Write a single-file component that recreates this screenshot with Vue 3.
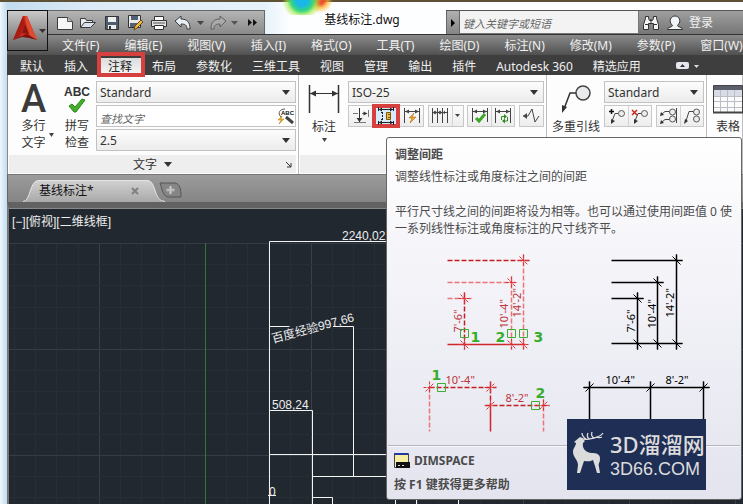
<script setup>
import { ref } from 'vue'

const menus = ['文件(F)', '编辑(E)', '视图(V)', '插入(I)', '格式(O)', '工具(T)', '绘图(D)', '标注(N)', '修改(M)', '参数(P)', '窗口(W)']
const tabs = ['默认', '插入', '注释', '布局', '参数化', '三维工具', '视图', '管理', '输出', '插件', 'Autodesk 360', '精选应用']
const activeTab = ref('注释')
const textStyle = ref('Standard')
const textHeight = ref('2.5')
const dimStyle = ref('ISO-25')
const leaderStyle = ref('Standard')
const search = ref('')
const findText = ref('')

// Drawing grid: one major line for every five minor ones, 106 px apart.
const gridX = Array.from({ length: 36 }, (_, i) => ({ at: Math.round(14 + i * 21.2), major: i % 5 === 4 }))
const gridY = Array.from({ length: 14 }, (_, i) => ({ at: Math.round(243 + i * 21.2), major: i % 5 === 0 }))

const down = (x, y) => `M${x - 6} ${y}h12M${x} ${y - 6}v12M${x - 4} ${y - 4}l8 8`
const up = (x, y) => `M${x - 6} ${y}h12M${x} ${y - 6}v12M${x - 4} ${y + 4}l8 -8`
const redTicks = [down(464, 298), down(511, 282), down(523, 260), down(464, 344), down(511, 344), down(523, 344), up(429, 387), up(490, 387), up(490, 405), up(543, 405)].join('')
const blackTicks = [down(637, 298), down(657, 282), down(676, 260), down(637, 343), down(657, 343), down(676, 343), up(589, 387), up(650, 387), up(703, 387)].join('')
const picks = [[464, 333], [511, 333], [523, 333], [441, 387], [535, 405]]
</script>

<template>
  <div class="window">
    <div class="orb" aria-hidden="true"></div>
    <header class="header">
      <button class="app" aria-label="应用程序菜单">
        <svg width="38" height="38" viewBox="0 0 38 38">
          <path d="M4 28L14 4l4 0 10 24-7-4-6-1-5 2z" fill="#c9291c" />
          <path d="M14 4L4 28l6-3 6-13z" fill="#a81c14" />
          <path d="M16 4l2 0 10 24-7-4-4-12z" fill="#e2492f" />
          <path d="M4 28l6-3 8-3 10 6-8-2-7-1z" fill="#7e100d" />
          <path d="M13 21l3-9 4 10z" fill="#8b1711" />
          <path d="M30 17h7l-3.500 4z" fill="#333" />
        </svg>
      </button>
      <div class="toprow">
        <div class="quick">
          <button class="q" aria-label="新建"><svg width="18" height="16" viewBox="0 0 18 16"><path d="M1.500 2.500h10l5 4v8h-15z" fill="#f6f6f6" stroke="#3b3b3b" /><path d="M11.500 2.500v4h5" fill="#bbb" stroke="#555" /></svg></button>
          <button class="q" aria-label="打开"><svg width="18" height="16" viewBox="0 0 18 16"><path d="M1.500 12.500v-9h5l1 2h6v2" fill="#e8ecf0" stroke="#3b3b3b" /><path d="M1.500 12.500l4-5h11l-5 5z" fill="#dbe3ec" stroke="#3b3b3b" /></svg></button>
          <button class="q" aria-label="保存"><svg width="16" height="16" viewBox="0 0 16 16"><path d="M1.500 1.500h13v13h-13z" fill="#4d5c70" stroke="#333" /><path d="M4 2h8v5H4zM4 10h8v4H4z" fill="#eee" /><path d="M5 11h2v3H5z" fill="#333" /></svg></button>
          <button class="q" aria-label="另存为"><svg width="17" height="17" viewBox="0 0 17 17"><path d="M1.500 1.500h12v12h-12z" fill="#e9e9e9" stroke="#333" /><path d="M4 2h7v4H4zM3 9h7v4H3z" fill="#536176" /><path d="M7 16l1-4 6-6 2 2-6 6z" fill="#f1b640" stroke="#6b4a12" /></svg></button>
          <button class="q" aria-label="打印"><svg width="18" height="16" viewBox="0 0 18 16"><path d="M4.500 6V1.500h9V6" fill="#fff" stroke="#333" /><path d="M1.500 5.500h15v6h-15z" fill="#e2e2e2" stroke="#333" /><path d="M3 8h12" stroke="#555" /><path d="M4.500 10.500h9v4h-9z" fill="#fff" stroke="#333" /></svg></button>
          <button class="q" aria-label="放弃"><svg width="18" height="16" viewBox="0 0 18 16"><path d="M1 6l6-5v3c6 0 9 3 9 10h-3c0-4-2-5-6-5v3z" fill="#e6edf3" stroke="#3a3a3a" /></svg></button>
          <button class="q small" aria-label="放弃列表"><svg width="7" height="4"><path d="M0 0h7l-3.500 4z" fill="#444" /></svg></button>
          <button class="q" aria-label="重做"><svg width="18" height="16" viewBox="0 0 18 16"><path d="M17 6l-6-5v3c-6 0-9 3-9 10h3c0-4 2-5 6-5v3z" fill="#a9a9a9" stroke="#616161" /></svg></button>
          <button class="q small" aria-label="重做列表"><svg width="7" height="4"><path d="M0 0h7l-3.500 4z" fill="#555" /></svg></button>
          <button class="q" aria-label="更多"><svg width="9" height="7"><path d="M0 0l4 3.500-4 3.500zM5 0l4 3.500-4 3.500z" fill="#111" /></svg></button>
        </div>
        <h1 class="title">基线标注.dwg</h1>
        <div class="info">
          <button class="expand" aria-label="展开搜索"><svg width="4" height="8"><path d="M0 0l4 4-4 4z" fill="#000" /></svg></button>
          <input v-model="search" class="search" type="text" aria-label="搜索" placeholder="键入关键字或短语" />
          <button class="ib" aria-label="查找"><svg width="18" height="16" viewBox="0 0 18 16"><path d="M1.500 14.500v-5l2-6V1.500h3v2l1 2h3l1-2v-2h3v2l2 6v5h-5v-6h-5v6z" fill="#f4f4f4" stroke="#333" /><path d="M3 9.500h3M12 9.500h3M9 4v4" stroke="#333" /></svg></button>
          <button class="ib login"><svg width="18" height="16" viewBox="0 0 18 16"><path d="M1.500 14.500c0-3 5-2 5-4-5-5-1-9.500 2.500-9.500s7.500 4.500 2.500 9.500c0 2 5 1 5 4z" fill="#f1f4f6" stroke="#333" /></svg>登录</button>
        </div>
      </div>
      <nav class="menubar"><a v-for="m in menus" :key="m" href="#">{{ m }}</a></nav>
    </header>

    <div class="tabs" role="tablist">
      <button v-for="t in tabs" :key="t" role="tab" class="tab" :class="{ active: t === activeTab }" :aria-selected="t === activeTab" @click="activeTab = t">{{ t }}</button>
      <button class="collapse" aria-label="最小化功能区"><svg width="24" height="9"><rect x="0" y="1" width="13" height="7" rx="2" fill="#e6e6ee" /><path d="M4 6h5L6.500 3z" fill="#333" /><path d="M18 4h5l-2.500 3z" fill="#ddd" /></svg></button>
    </div>

    <section class="ribbon">
      <div class="panel text-panel">
        <div class="body">
          <button class="big mtext"><span class="glyph">A</span><span>多行</span><span>文字</span><svg class="more" width="5" height="4"><path d="M0 0h5l-2.500 4z" fill="#444" /></svg></button>
          <button class="big spell">
            <span class="abc">ABC</span>
            <svg width="18" height="15" viewBox="0 0 18 15"><path d="M1 8l3-2 3 3 7-8 3 1L8 14H6z" fill="#43ae2b" stroke="#2d8a1b" /></svg>
            <span>拼写</span><span>检查</span>
          </button>
          <div class="fields">
            <div class="combo"><select v-model="textStyle" aria-label="文字样式"><option>Standard</option></select><svg width="8" height="5"><path d="M0 0h8l-4 5z" fill="#333" /></svg></div>
            <div class="combo find">
              <input v-model="findText" type="text" aria-label="查找文字" placeholder="查找文字" />
              <svg width="18" height="17" viewBox="0 0 18 17"><path d="M4 9C0 5 3 1 8 1" fill="none" stroke="#555" /><path d="M9 9l7 6" stroke="#444" stroke-width="3" /><path d="M5 8l-4 4h3l-2 4 5-5H4z" fill="#f5b52d" stroke="#b3700c" stroke-width=".5" /><text x="4" y="7" class="tinyabc">ABC</text></svg>
            </div>
            <div class="combo"><select v-model="textHeight" aria-label="文字高度"><option>2.5</option></select><svg width="8" height="5"><path d="M0 0h8l-4 5z" fill="#333" /></svg></div>
          </div>
        </div>
        <button class="foot">文字<svg width="8" height="5"><path d="M0 0h8l-4 5z" fill="#333" /></svg><svg class="launch" width="6" height="6"><path d="M0 0l5 5M5 1v4H1" stroke="#333" fill="none" /></svg></button>
      </div>

      <div class="panel dim-panel">
        <div class="body">
          <button class="big dim">
            <svg width="32" height="30" viewBox="0 0 32 30"><path d="M1.500 1v28M30.500 1v28" stroke="#333" stroke-width="1.500" /><path d="M2 9.500h28" stroke="#333" /><path d="M2 9.500l6-3v6zM30 9.500l-6-3v6z" fill="#333" /></svg>
            <span>标注</span><svg width="5" height="4"><path d="M0 0h5l-2.500 4z" fill="#444" /></svg>
          </button>
          <div class="fields">
            <div class="combo"><select v-model="dimStyle" aria-label="标注样式"><option>ISO-25</option></select><svg width="8" height="5"><path d="M0 0h8l-4 5z" fill="#333" /></svg></div>
            <div class="tools">
              <div class="group">
                <button aria-label="打断"><svg width="18" height="18" viewBox="0 0 18 18"><path d="M1 6.500h5M10 6.500h5M16.500 3v7M2 15.500h12" stroke="#777" /><path d="M7.500 1v14" stroke="#333" /><path d="M7.500 15l-3-4h6zM15.500 6.500l-4-2v4z" fill="#333" /></svg></button>
                <button class="hot" aria-label="调整间距"><svg width="18" height="18" viewBox="0 0 18 18"><path d="M1.500 0v4M16.500 0v4M1 2.500h16M1.500 14v4M16.500 14v4M1 15.500h16" stroke="#222" /><path d="M2 2.500l3-2v4zM16 2.500l-3-2v4zM2 15.500l3-2v4zM16 15.500l-3-2v4z" fill="#222" /><path d="M5.500 5v8M4 5.500h3M4 12.500h3" stroke="#222" stroke-dasharray="2 1" /><path d="M9.500 5.500h4v7h-4z" fill="#f6bb3c" stroke="#7a5612" /><path d="M11 7.500h2M11 10.500h2" stroke="#7a5612" /></svg></button>
                <button aria-label="快速标注"><svg width="18" height="18" viewBox="0 0 18 18"><path d="M1.500 1v15M16.500 1v15M2 4.500h14" stroke="#444" /><path d="M2 4.500l4-2v4zM16 4.500l-4-2v4z" fill="#444" /><path d="M11 6l-5 5h3l-2 5 6-6H9z" fill="#f3a42b" stroke="#a35d0b" stroke-width=".5" /></svg></button>
              </div>
              <div class="group">
                <button aria-label="连续"><svg width="18" height="18" viewBox="0 0 18 18"><path d="M1.500 1v15M6.500 1v15M11.500 1v15M16.500 1v15M1 5.500h16" stroke="#444" /><path d="M2 5.500l2-2v4zM6 5.500l-2-2v4zM7 5.500l2-2v4zM11 5.500l-2-2v4zM12 5.500l2-2v4z" fill="#444" /></svg></button>
                <button class="narrow" aria-label="连续列表"><svg width="5" height="4"><path d="M0 0h5l-2.500 3z" fill="#444" /></svg></button>
              </div>
              <div class="group">
                <button aria-label="检验"><svg width="18" height="18" viewBox="0 0 18 18"><path d="M1.500 1v14M16.500 1v14M2 4.500h14" stroke="#444" /><path d="M2 4.500l4-2v4zM16 4.500l-4-2v4z" fill="#444" /><path d="M5 11l3 3 6-7" stroke="#3ea527" stroke-width="3" fill="none" /></svg></button>
                <button aria-label="更新"><svg width="18" height="18" viewBox="0 0 18 18"><path d="M1.500 1v15M16.500 1v15M2 4.500h14" stroke="#444" /><path d="M2 4.500l4-2v4zM16 4.500l-4-2v4z" fill="#444" /><path d="M7.500 13V9.500H11M13.500 10v4H10" stroke="#328a22" fill="none" /><path d="M10 7l3 2.500-3 2.500zM11 11.500l-3 2.500 3 2.500z" fill="#328a22" /></svg></button>
              </div>
              <div class="group">
                <button aria-label="折弯"><svg width="18" height="18" viewBox="0 0 18 18"><path d="M1 9h5l4-7 3 13 4-6" stroke="#444" fill="none" /><path d="M1 9l4-3v6z" fill="#444" /></svg></button>
              </div>
            </div>
          </div>
        </div>
        <div class="foot"></div>
      </div>

      <div class="panel lead-panel">
        <div class="body">
          <button class="big lead">
            <svg width="32" height="30" viewBox="0 0 32 30"><circle cx="23" cy="9" r="7" fill="#e8ebee" stroke="#444" stroke-width="1.500" /><path d="M16 9h-6L4 25" stroke="#333" stroke-width="1.500" fill="none" /><path d="M2 29l0-8 5 2z" fill="#333" /></svg>
            <span>多重引线</span>
          </button>
          <div class="fields">
            <div class="combo"><select v-model="leaderStyle" aria-label="多重引线样式"><option>Standard</option></select><svg width="8" height="5"><path d="M0 0h8l-4 5z" fill="#333" /></svg></div>
            <div class="tools">
              <div class="group">
                <button aria-label="添加引线"><svg width="18" height="18" viewBox="0 0 18 18"><circle cx="13.500" cy="6.500" r="3" fill="#eee" stroke="#555" /><path d="M10 6.500H7L4 14" stroke="#444" fill="none" /><path d="M3 17v-5l4 2z" fill="#333" /><path d="M1 4.500h5M3.500 2v5" stroke="#111" stroke-width="1.500" /></svg></button>
                <button aria-label="删除引线"><svg width="18" height="18" viewBox="0 0 18 18"><circle cx="13.500" cy="6.500" r="3" fill="#eee" stroke="#555" /><path d="M10 6.500H7L4 14" stroke="#444" fill="none" /><path d="M3 17v-5l4 2z" fill="#333" /><path d="M1 3l5 5M6 3L1 8" stroke="#cb261d" stroke-width="1.500" /></svg></button>
              </div>
              <div class="group">
                <button aria-label="对齐"><svg width="18" height="18" viewBox="0 0 18 18"><circle cx="12.500" cy="5" r="3" fill="#eee" stroke="#555" /><circle cx="12.500" cy="12" r="3" fill="#eee" stroke="#555" /><path d="M16.500 1v15M9 4.500H5L2 7M9 12.500H5L2 15" stroke="#444" fill="none" /><path d="M0 9l1-4 3 3zM0 17l1-4 3 3z" fill="#333" /></svg></button>
                <button aria-label="合并"><svg width="18" height="18" viewBox="0 0 18 18"><circle cx="13.500" cy="5" r="3" fill="#eee" stroke="#555" /><circle cx="13.500" cy="12" r="3" fill="#eee" stroke="#555" /><path d="M10 4.500H6L3 14" stroke="#444" fill="none" /><path d="M1 17l1-5 3 2z" fill="#333" /></svg></button>
              </div>
            </div>
          </div>
        </div>
        <div class="foot"></div>
      </div>

      <div class="panel table-panel">
        <div class="body">
          <button class="big tbl">
            <svg width="30" height="30" viewBox="0 0 30 30"><path d="M.500 1.500h29v27H.500z" fill="#fbfbfb" stroke="#444" /><path d="M1 2h28v4H1z" fill="#59606b" /><path d="M1 6h28v6H1z" fill="#d8dde5" /><path d="M7.500 6v22M14.500 6v22M21.500 6v22M1 12.500h28M1 17.500h28M1 23.500h28" stroke="#b9bec6" /><path d="M0 28.500h30" stroke="#444" stroke-width="2" /></svg>
            <span>表格</span>
          </button>
        </div>
        <div class="foot"></div>
      </div>
    </section>

    <div class="files">
      <div class="file">
        <svg class="shape" width="142" height="23" viewBox="0 0 142 23"><defs><linearGradient id="tabfill" x1="0" y1="0" x2="0" y2="1"><stop offset="0" stop-color="#d2d2d2" /><stop offset="1" stop-color="#a9a9a9" /></linearGradient></defs><path d="M0 23c8 0 6-22 16-22h108c10 0 6 22 18 22z" fill="url(#tabfill)" /><path d="M0 22.500c8 0 6-21 16-21h108c10 0 6 21 18 21" fill="none" stroke="#e4e4e4" /></svg>
        <span class="fname">基线标注*</span>
        <button class="close" aria-label="关闭"><svg width="8" height="8"><path d="M1 1l6 6M7 1L1 7" stroke="#808080" stroke-width="2" /></svg></button>
      </div>
      <button class="add" aria-label="新图形"><svg width="23" height="16" viewBox="0 0 23 16"><path d="M1 1h15c5 1 6 6 6 14H9C4 14 3 7 1 1z" fill="#858585" stroke="#555" /><path d="M11.500 4v8M7.500 8h8" stroke="#aaa" stroke-width="3" /><path d="M11.500 4v8M7.500 8h8" stroke="#ccc" /></svg></button>
    </div>

    <main class="canvas">
      <svg class="drawing" role="img" aria-label="基线标注图形">
        <g transform="translate(-9 -208)">
          <path v-for="g in gridX" :key="'x' + g.at" :d="`M${g.at + 0.5} 243V2000`" :stroke="g.major ? '#38414a' : '#262e36'" />
          <path v-for="g in gridY" :key="'y' + g.at" :d="`M9 ${g.at + 0.5}H3000`" :stroke="g.major ? '#343d46' : '#262e36'" />
          <path d="M205.500 243V2000" stroke="#2f7a33" />
          <path d="M269.500 504V241.500H400M269.500 326.500h20M333 326.500h20.500V476M269.500 410.500h43V504M269.500 454.500H400M312.500 476.500H400M312.500 497.500h20V504M268 495.500h8M395.500 495v9M416.500 495v9M458.500 495v9" fill="none" stroke="#f4f4f4" />
          <text x="12" y="226">[−][俯视][二维线框]</text>
          <text x="342" y="240">2240,02</text>
          <text x="272" y="409">508,24</text>
          <text x="269" y="496">0</text>
          <text transform="translate(273 343) rotate(-15)">百度经验997,66</text>
        </g>
      </svg>
    </main>

    <aside class="tip" role="tooltip">
      <h2>调整间距</h2>
      <p class="summary">调整线性标注或角度标注之间的间距</p>
      <p class="desc">平行尺寸线之间的间距将设为相等。也可以通过使用间距值 0 使一系列线性标注或角度标注的尺寸线齐平。</p>
      <svg class="figure" role="img" aria-label="间距示例">
        <g transform="translate(-386.500 -239.500)">
          <g fill="none" stroke-width="1.500" stroke-dasharray="5 2">
            <path d="M511 276V349M523 254V349M429 387V431M543 399V431M447 282h70M447 298h24" stroke="#ee7375" />
            <path d="M464 292V349M447 260h82M429 387h67M485 405h64M490 381v24" stroke="#c51d22" />
          </g>
          <path d="M447 344h78M490 405v26" stroke="#cf2529" stroke-width="1.500" />
          <path :d="redTicks" fill="none" stroke="#dc3236" stroke-dasharray="3 1" />
          <g class="red">
            <text transform="translate(461 332) rotate(-90)">7'-6"</text>
            <text transform="translate(507 328) rotate(-90)">10'-4"</text>
            <text transform="translate(520 317) rotate(-90)">14'-2"</text>
            <text x="445" y="383">10'-4"</text><text x="505" y="401">8'-2"</text>
          </g>
          <path v-for="(p, i) in picks" :key="i" :d="`M${p[0] - 4} ${p[1] - 4}h8v8h-8z`" fill="none" stroke="#3cae32" />
          <g class="num"><text x="470" y="341">1</text><text x="495" y="341">2</text><text x="533" y="341">3</text><text x="431" y="379">1</text><text x="535" y="397">2</text></g>
          <path d="M611 260h71M611 282h52M611 298h32M611 343h71M637 292v57M657 276v73M676 254v95M583 387h126M589 381v50M650 381v50M703 381v50" stroke="#000" stroke-width="1.500" />
          <path :d="blackTicks" fill="none" stroke="#000" />
          <g class="black">
            <text transform="translate(634 332) rotate(-90)">7'-6"</text>
            <text transform="translate(655 328) rotate(-90)">10'-4"</text>
            <text transform="translate(673 317) rotate(-90)">14'-2"</text>
            <text x="605" y="383">10'-4"</text><text x="665" y="383">8'-2"</text>
          </g>
        </g>
      </svg>
      <footer>
        <div class="cmd"><svg width="16" height="16" viewBox="0 0 16 16"><path d="M.500.500h14v14H.500z" fill="#f7f0a0" stroke="#445" /><path d="M0 0h14v2H0z" fill="#2439a0" /><path d="M2 9h14v6H2z" fill="#111" /><path d="M4 12.500h2M8 12.500h2" stroke="#ddd" /></svg>DIMSPACE</div>
        <div class="help">按 F1 键获得更多帮助</div>
      </footer>
      <div class="brand">
        <svg width="34" height="44" viewBox="0 0 34 44" aria-hidden="true">
          <path d="M2 11l6-5 2 1 3 3-2 2c-1 5 2 9 8 10 6 0 9 1 9 6 0 4-2 4-1 8l1 6h-3l-2-7-2-6c-3 2-6 1-9 1l-2 6-2 6H5l1-8c0-5-5-8-5-13 0-4 3-6 3-9z" fill="#dcdcdc" />
          <path d="M9 7c4 3 9 1 13 0s7-2 9-5M14 8c-3-2-4-4-4-6M17 8c-2-2-2-4-1-6M22 7c-2-1-3-3-2-6M24 6c3 1 4 1 6 0" fill="none" stroke="#dcdcdc" stroke-width="1.300" />
        </svg>
        <div class="words"><span class="name">3D溜溜网</span><span class="site">3D66.COM</span></div>
      </div>
    </aside>
  </div>
</template>

<style>
body { margin: 0; background: #5f5136; }
</style>

<style scoped>
* { box-sizing: border-box; }
.window {
  position: relative; display: flex; flex-direction: column; min-height: 100vh; padding: 10px 0 0 7px; overflow: hidden;
  font-family: "Noto Sans", "Noto Sans CJK SC", sans-serif; font-size: 12px; line-height: 17px; color: #333;
  background: linear-gradient(#5f5136 0 2px, transparent 2px), linear-gradient(90deg, #eef7fd 0, #c3dcee 7px, #dcebf7 90px, #e6f2fb 265px, #fdfeff 290px);
}
button, input, select { font: inherit; color: inherit; margin: 0; }
button { display: flex; align-items: center; justify-content: center; padding: 0; border: 0; background: none; }
svg { display: block; flex: none; }
h1, h2, p { margin: 0; font-size: 12px; font-weight: 400; }
.orb { position: absolute; left: 280px; top: 0; width: 56px; height: 15px; background: radial-gradient(circle at 22px 0, #18b7e8 0 6px, #35d67a 11px, rgba(160, 235, 60, .6) 15px, transparent 20px), radial-gradient(circle at 40px 0, #f04b2c 0 4px, rgba(255, 180, 40, .7) 8px, transparent 13px); }
.header { position: relative; display: grid; grid-template-columns: 41px 1fr; grid-template-rows: 24px 21px; }
.app { grid-area: 1 / 1 / 3 / 2; height: 41px; z-index: 2; border: 1px solid #111; background: linear-gradient(#c9c9c9, #8b8b8b 60%, #626262); }
.toprow { grid-area: 1 / 2; display: flex; min-width: 0; }
.quick { display: flex; width: 217px; padding-left: 5px; border: solid #666; border-width: 1px 1px 0 0; background: linear-gradient(#b4b4b4, #8a8a8a); }
.q { width: 24px; }
.q.small { width: 11px; }
.title { flex: 1; text-align: center; padding: 1px 0 6px 13px; color: #111; }
.info { display: flex; width: 297px; border-top: 1px solid #555; background: linear-gradient(#9f9f9f, #767676); color: #f2f2f2; }
.expand { width: 14px; border: solid #666; border-width: 0 1px; background: linear-gradient(#b0b0b0, #858585); }
.search { flex: 1; min-width: 0; margin-bottom: 1px; padding: 2px 3px 0; border: 0; border-right: 1px solid #777; border-radius: 0; background: #f3f3f3; color: #333; font-size: 11px; }
.search::placeholder, .find input::placeholder { color: #666; font-style: italic; opacity: 1; }
.ib { width: 24px; }
.ib.login { width: 80px; justify-content: flex-start; padding-left: 3px; gap: 5px; }
.menubar { grid-area: 2 / 1 / 3 / 3; display: flex; align-items: center; gap: 25px; padding-left: 55px; overflow: hidden; border-top: 1px solid #333; background: linear-gradient(#8a8a8a, #505050); white-space: nowrap; }
.menubar a { color: #efefef; text-decoration: none; flex: none; }
.tabs { display: flex; height: 20px; padding-left: 3px; background: #3e3e3e; color: #f0f0f0; white-space: nowrap; }
.tab { position: relative; padding: 2px 10px 0; flex: none; }
.tab.active { color: #222; background: linear-gradient(#3e3e3e 3px, #dcdcdc 3px, #f6f6f6); }
.tab.active::after { content: ""; position: absolute; z-index: 3; inset: -3px -3px -2px -1px; border: 4px solid #d6403f; }
.collapse { margin-left: 25px; }
.ribbon { display: flex; height: 99px; border-left: 1px solid #888; background: #fdfdfd; }
.panel { display: flex; flex: none; flex-direction: column; border-right: 1px solid #bdbdbd; padding: 0 2px 1px 1px; }
.body { display: flex; height: 80px; padding-top: 6px; }
.foot { position: relative; display: flex; align-items: center; justify-content: center; gap: 7px; width: 100%; height: 18px; background: #eee; }
.launch { position: absolute; right: 4px; bottom: 5px; }
.text-panel { width: 291px; }
.dim-panel { width: 248px; }
.lead-panel { width: 160px; }
.table-panel { flex: 1; min-width: 0; }
.big { position: relative; flex-direction: column; justify-content: flex-start; align-self: flex-start; flex: none; white-space: nowrap; }
.mtext { width: 49px; }
.glyph { font-family: Roboto, sans-serif; font-size: 38px; font-weight: 500; line-height: 36px; height: 36px; color: #3b3b3b; }
.more { position: absolute; right: 4px; bottom: 14px; }
.spell { width: 38px; }
.abc { height: 17px; padding-top: 3px; font: 700 12px/16px "Liberation Sans", sans-serif; }
.spell svg { margin-bottom: 4px; }
.fields { display: flex; flex-direction: column; gap: 2px; flex: 1; min-width: 0; }
.combo { display: grid; grid-template-columns: 1fr 18px; align-items: center; height: 22px; border: 1px solid #c2c2c2; background: linear-gradient(#fcfcfc, #ececec); }
.combo select, .combo input { grid-area: 1 / 1 / 2 / 3; width: 100%; height: 20px; padding: 0 3px; border: 0; background: transparent; appearance: none; }
.combo svg { grid-area: 1 / 2; pointer-events: none; justify-self: center; }
.combo.find { background: #fff; }
.combo.find input { padding-top: 4px; font-size: 11px; }
.tinyabc { font: 700 6px "Liberation Sans", sans-serif; fill: #111; }
.dim { width: 48px; padding-top: 3px; }
.dim span { margin: 4px 0 3px; }
.tools { display: flex; justify-content: space-between; }
.group { display: flex; height: 22px; border: 1px solid #c8c8c8; background: linear-gradient(#fcfcfc, #ededed); }
.group button { width: 23px; }
.group button + button { border-left: 1px solid #d2d2d2; }
.group .hot { width: 28px; margin: -2px 0; border: 4px solid #d6403f; background: #d5ebfb; }
.group .hot + button { border-left: 0; }
.group .narrow { width: 11px; }
.lead { width: 56px; padding-top: 3px; }
.lead span, .tbl span { margin-top: 4px; }
.tbl { padding: 3px 0 0 5px; }
.files { display: flex; height: 28px; align-items: flex-end; padding-left: 15px; background: linear-gradient(#9b9b9b, #858585); border-left: 1px solid #666; border-top: 1px solid #777; }
.file { display: grid; grid-template-columns: 16px 1fr 24px; align-items: center; width: 142px; height: 23px; margin-right: -6px; }
.shape { grid-area: 1 / 1 / 2 / 4; }
.fname { grid-area: 1 / 2; color: #111; }
.close { grid-area: 1 / 3; justify-content: flex-start; margin-left: -10px; }
.add { margin-bottom: 4px; }
.canvas { flex: 1; display: flex; min-height: 290px; border-left: 2px solid #777; border-top: 6px solid #626262; background: #212830; box-shadow: inset 0 1px #888; }
.drawing { flex: 1; height: auto; fill: #eee; }
.drawing text { font: 12px "Liberation Sans", "Noto Sans CJK SC", sans-serif; }
.tip { position: absolute; z-index: 5; left: 386px; top: 137px; width: 356px; border: 1px solid #666; border-radius: 3px; padding: 8px 0 0; color: #4b4b4b; background: linear-gradient(#fff, #f4f4f9 35%, #e4e4ef); }
.tip h2, .tip p { padding: 0 8px; }
.tip h2 { font-weight: 600; }
.tip .summary { margin-top: 5px; }
.tip .desc { margin-top: 18px; }
.figure { width: 100%; height: 205px; margin-top: 3px; }
.figure text { font: 11px "Noto Sans", sans-serif; }
.red { fill: #bd3439; }
.figure .num text { font: 700 14px "DejaVu Sans", sans-serif; fill: #37ad2b; }
.tip footer { display: flex; flex-direction: column; gap: 7px; margin: 0 1px; padding: 6px 6px; border-top: 1px solid #b6b6be; font-weight: 700; box-shadow: inset 0 1px #f6f6fb; }
.cmd { display: flex; align-items: center; gap: 4px; }
.brand { position: absolute; left: 180px; top: 281px; display: flex; gap: 4px; width: 139px; height: 71px; padding: 12px 0 0 5px; background: #1f2e55; color: #dcdcdc; }
.words { display: flex; flex-direction: column; white-space: nowrap; }
.name { font-size: 22px; line-height: 26px; font-weight: 500; }
.site { margin-top: 3px; font: 18px/18px "Liberation Sans", sans-serif; }
</style>
